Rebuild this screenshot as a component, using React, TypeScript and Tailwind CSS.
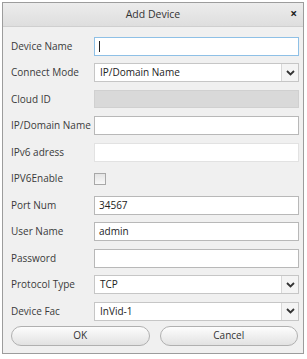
import React from 'react';

const font = { fontFamily: '"Open Sans", "Noto Sans", "Liberation Sans", sans-serif' };

type Row = {
  label: string;
  kind: 'text' | 'select' | 'disabled' | 'check';
  value?: string;
  focused?: boolean;
  light?: boolean;
};

const rows: Row[] = [
  { label: 'Device Name', kind: 'text', focused: true },
  { label: 'Connect Mode', kind: 'select', value: 'IP/Domain Name' },
  { label: 'Cloud ID', kind: 'disabled' },
  { label: 'IP/Domain Name', kind: 'text' },
  { label: 'IPv6 adress', kind: 'text', light: true },
  { label: 'IPV6Enable', kind: 'check' },
  { label: 'Port Num', kind: 'text', value: '34567' },
  { label: 'User Name', kind: 'text', value: 'admin' },
  { label: 'Password', kind: 'text' },
  { label: 'Protocol Type', kind: 'select', value: 'TCP' },
  { label: 'Device Fac', kind: 'select', value: 'InVid-1' },
];

const Chevron = () => (
  <svg width="9" height="6" viewBox="0 0 9 6">
    <path d="M1 1 L4.5 4.5 L8 1" fill="none" stroke="#333" strokeWidth="1.8" />
  </svg>
);

const Field: React.FC<{ row: Row }> = ({ row }) => {
  if (row.kind === 'check') {
    return (
      <div className="w-[12px] h-[12px] border border-[#a8a8a8] bg-gradient-to-b from-[#e4e4e4] to-[#f8f8f8]" />
    );
  }
  if (row.kind === 'disabled') {
    return <div className="h-[18px] flex-1 bg-[#d9d9d9] border border-[#d0d0d0]" />;
  }
  if (row.kind === 'select') {
    return (
      <div className="h-[19px] flex-1 flex border border-[#c6c6c6] bg-white">
        <div className="flex-1 flex items-center pl-[5px] text-[10px] text-[#222]">{row.value}</div>
        <div className="w-[17px] flex items-center justify-center border-l border-[#d8d8d8] bg-[#f4f4f4]">
          <Chevron />
        </div>
      </div>
    );
  }
  return (
    <div
      className={`h-[19px] flex-1 flex items-center pl-[4px] bg-white text-[10px] text-[#222] border ${
        row.focused ? 'border-[#8ec0e6]' : row.light ? 'border-[#e2e2e2]' : 'border-[#b8b8b8]'
      }`}
    >
      {row.value}
      {row.focused && <div className="w-px h-[11px] bg-[#222]" />}
    </div>
  );
};

export default function App() {
  return (
    <div className="w-[307px] h-[359px] bg-white pt-[2px] pl-[2px]" style={font}>
      <div className="w-[302px] h-[352px] border border-[#9c9c9c] bg-[#f0f0f0] flex flex-col">
        <div className="h-[24px] flex items-center relative border-b border-[#cfcfcf] bg-gradient-to-b from-[#ececec] to-[#dedede]">
          <div className="flex-1 text-center text-[10.5px] text-[#333]">Add Device</div>
          <div className="absolute right-[6px] top-[5px] text-[12px] font-bold text-[#222] leading-none">×</div>
        </div>
        <div className="flex flex-col pt-[6px] pl-[8px] pr-[4px]">
          {rows.map((row) => (
            <div key={row.label} className="h-[26.5px] flex items-center">
              <div className="w-[83px] shrink-0 text-[10px] text-[#3a3a3a] whitespace-nowrap">{row.label}</div>
              <Field row={row} />
            </div>
          ))}
        </div>
        <div className="flex gap-[10px] pl-[8px] pr-[5px] pt-[1px]">
          <button className="flex-1 h-[20px] rounded-[10px] border border-[#b0b0b0] bg-gradient-to-b from-[#fdfdfd] to-[#e2e2e2] text-[10px] text-[#333]">
            OK
          </button>
          <button className="flex-1 h-[20px] rounded-[10px] border border-[#b0b0b0] bg-gradient-to-b from-[#fdfdfd] to-[#e2e2e2] text-[10px] text-[#333]">
            Cancel
          </button>
        </div>
      </div>
    </div>
  );
}
